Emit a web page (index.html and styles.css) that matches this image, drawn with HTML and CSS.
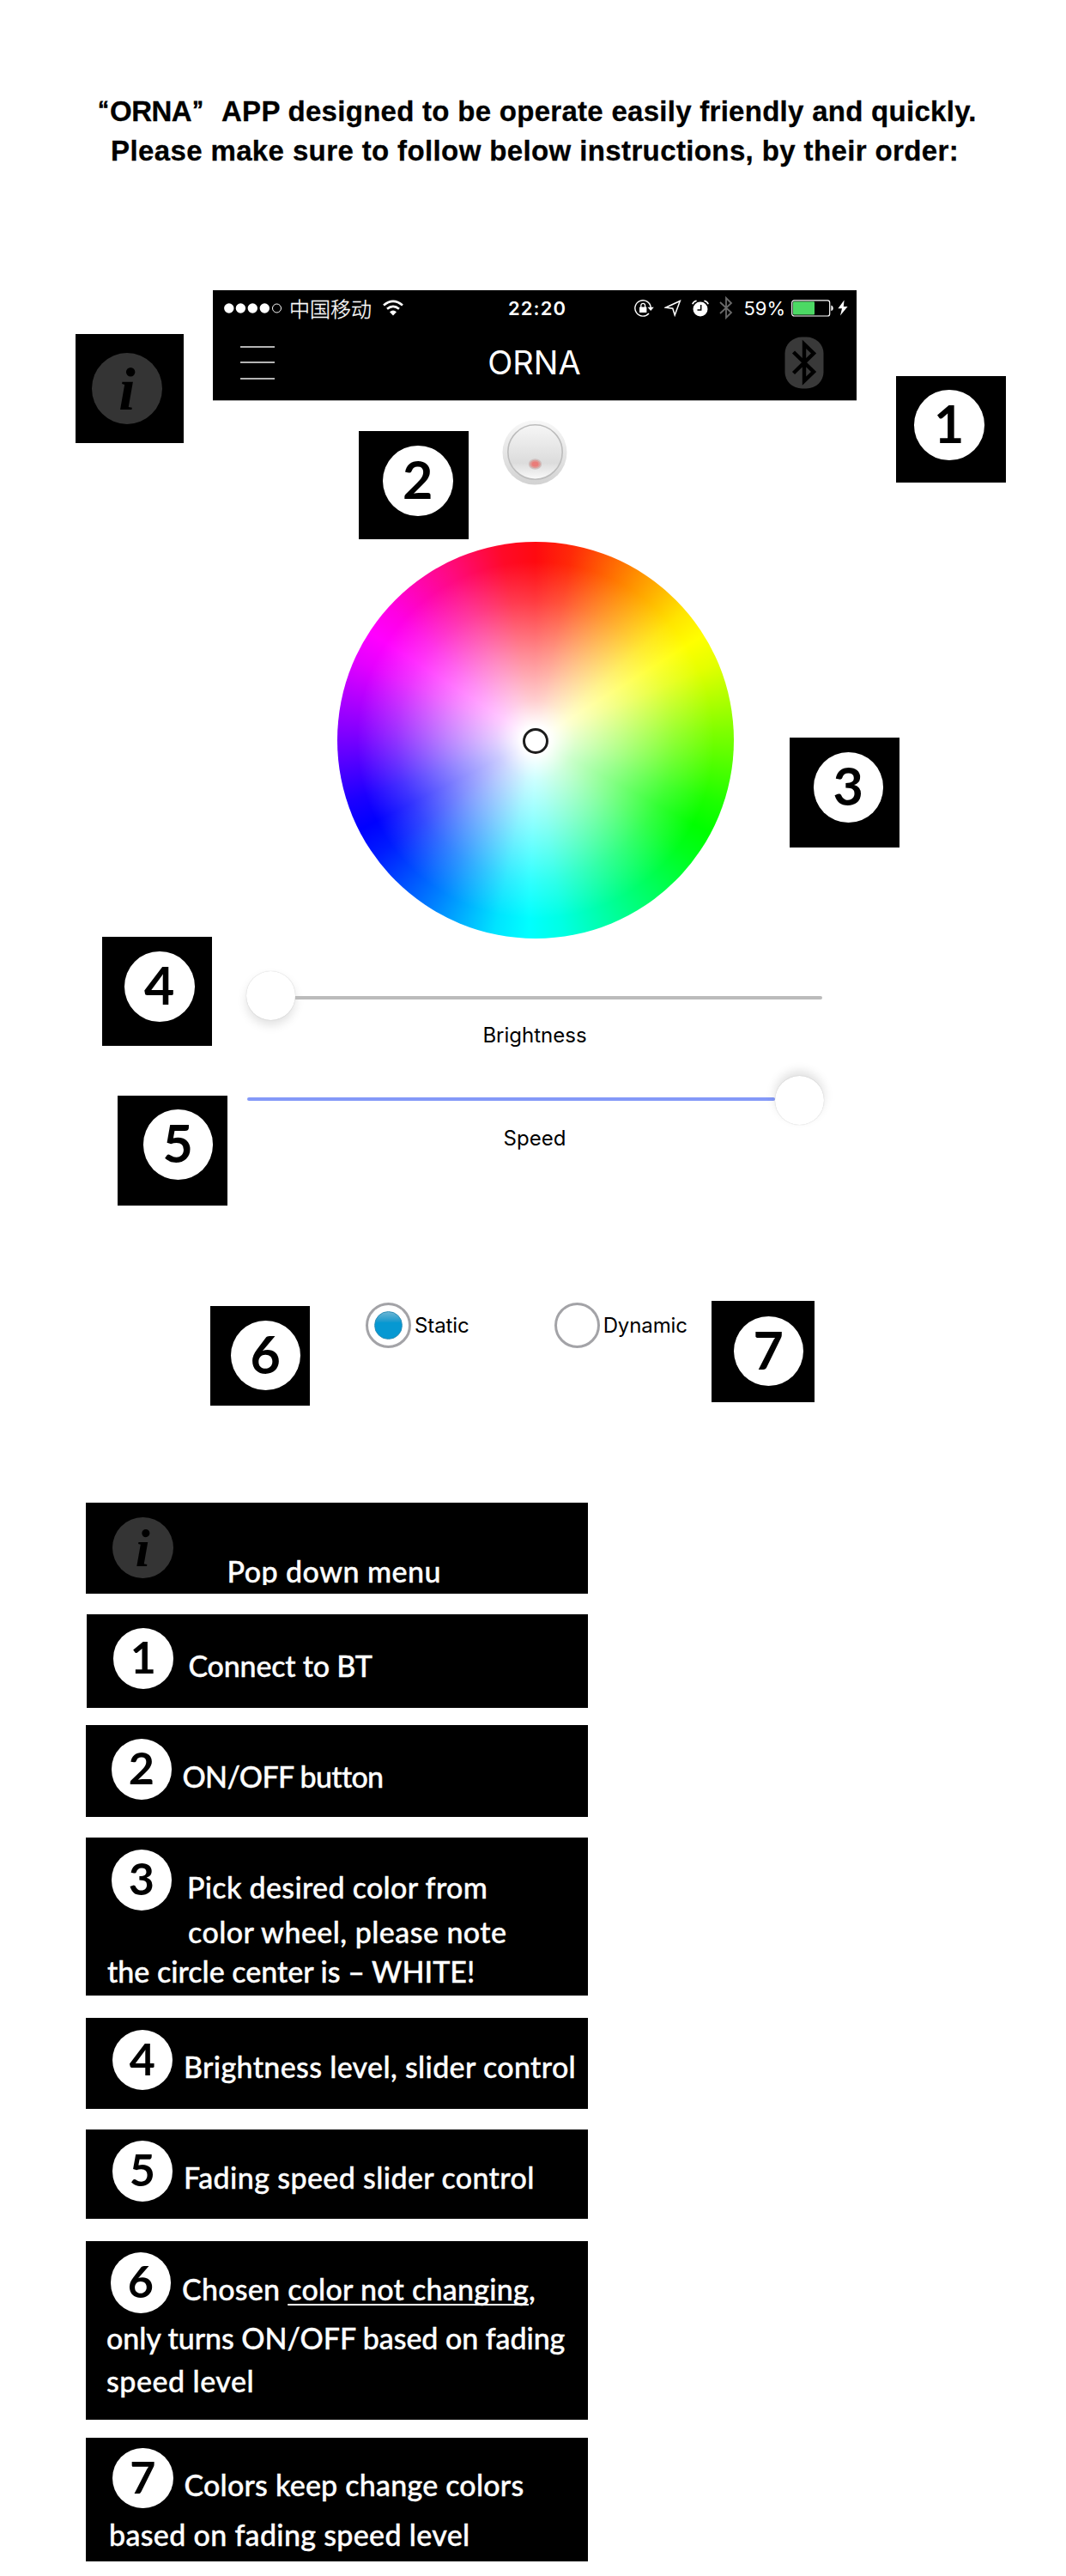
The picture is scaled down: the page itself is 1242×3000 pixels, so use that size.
FILE: index.html
```html
<!DOCTYPE html>
<html lang="en">
<head>
<meta charset="utf-8">
<title>ORNA APP instructions</title>
<link rel="stylesheet" href="styles.css">
</head>
<body>
<main class="page">
  <h1 class="title">
    <span class="title-line title-first"><span class="quote">“</span><span class="brand">ORNA</span><span class="quote quote-end">”</span><span class="title-rest">APP designed to be operate easily friendly and quickly.</span></span>
    <span class="title-line title-second">Please make sure to follow below instructions, by their order:</span>
  </h1>

  <section class="phone">
    <header class="phone-head">
      <div class="status">
        <div class="status-left">
          <svg width="70" height="14" viewBox="0 0 70 14"><g fill="#fff"><circle cx="6.800" cy="7" r="5.700"/><circle cx="20.400" cy="7" r="5.700"/><circle cx="34.300" cy="7" r="5.700"/><circle cx="48.300" cy="7" r="5.700"/></g><circle cx="62.500" cy="7" r="5" fill="none" stroke="#fff"/></svg>
          <span class="carrier">中国移动</span>
          <svg class="wifi" width="24" height="19" viewBox="0 0 24 19"><g fill="none" stroke="#fff" stroke-width="2.6"><path d="M1 6.5Q12-2.800 23 6.5"/><path d="M5 10.8Q12 4.800 19 10.8"/></g><path d="M8 14.2Q12 10.800 16 14.2L12 18.4Z" fill="#fff"/></svg>
        </div>
        <span class="time">22:20</span>
        <div class="status-right">
          <svg class="s-lock" width="23" height="20" viewBox="0 0 23 20"><path d="M19.2 9A9.2 9.2 0 1 0 17 16" fill="none" stroke="#fff" stroke-width="1.4"/><path d="M15.5 8.8h7.3l-3.6 4.2z" fill="#fff"/><rect x="6" y="8.4" width="8.4" height="6.6" rx=".6" fill="#fff"/><path d="M7.8 9V6.7a2.4 2.4 0 0 1 4.8 0V9" fill="none" stroke="#fff" stroke-width="1.3"/></svg>
          <svg class="s-arrow" width="20" height="20" viewBox="0 0 20 20"><path d="M18.3 1.5 1.6 9.2 9.8 10.2 12.2 18Z" fill="none" stroke="#fff" stroke-width="1.5"/></svg>
          <svg class="s-alarm" width="20" height="20" viewBox="0 0 20 20"><circle cx="10" cy="11" r="8.5" fill="#fff"/><path d="M.8 5.2Q2 2 5.6 1.3M19.2 5.2Q18 2 14.4 1.3" fill="none" stroke="#fff" stroke-width="1.6"/><path d="M10.7 6v6H6.5" fill="none" stroke="#000" stroke-width="1.5"/></svg>
          <svg class="s-bt" width="16" height="27" viewBox="0 0 16 27"><path d="M1 7 14 19 8 25V2L14 8 1 20" fill="none" stroke="#6a6a6a" stroke-width="1.8"/></svg>
          <span class="percent">59%</span>
          <svg class="s-battery" width="50" height="20" viewBox="0 0 50 20"><rect x=".7" y=".8" width="44" height="18.2" rx="2.6" fill="none" stroke="#fff" stroke-width="1.2"/><rect x="2" y="2.2" width="25" height="15.4" rx="1" fill="#4cd964"/><path d="M46.4 6.5q2.4.6 2.4 3.4t-2.4 3.4z" fill="#fff"/></svg>
          <svg class="s-bolt" width="12" height="19" viewBox="0 0 12 19"><path d="M7.6.4.4 10.3H5L3 18.6 11.6 7.9H6.8Z" fill="#fff"/></svg>
        </div>
      </div>
      <div class="nav">
        <div class="burger"><i></i><i></i><i></i></div>
        <span class="nav-title">ORNA</span>
        <svg class="nav-bt" width="46" height="61" viewBox="0 0 46 61"><rect x=".5" y=".5" width="45" height="60" rx="20" ry="19" fill="#393939"/><path d="M10.500 18 34 41 23 51.500V9L34 19.500 10.500 42.500" fill="none" stroke="#000" stroke-width="4.4"/></svg>
      </div>
    </header>

    <svg class="power" width="76" height="76" viewBox="0 0 76 76">
      <defs><linearGradient id="ring" x2="0" y2="1"><stop offset="0" stop-color="#f8f8f8"/><stop offset="1" stop-color="#d2d2d2"/></linearGradient><linearGradient id="face" x2="0" y2="1"><stop offset="0" stop-color="#f6f6f6"/><stop offset=".7" stop-color="#dcdcdc"/><stop offset="1" stop-color="#fafafa"/></linearGradient></defs>
      <circle cx="38" cy="38" r="37.500" fill="url(#ring)"/><circle cx="38.500" cy="37.500" r="31.700" fill="url(#face)" stroke="#bcbcbc" stroke-width="1.600"/>
      <ellipse cx="38.500" cy="51.500" rx="7" ry="5.500" fill="#dd9a96" stroke="#cfc0bf" stroke-width="1.500"/><ellipse cx="38.500" cy="51.500" rx="4" ry="3" fill="#ea7c79"/>
    </svg>

    <div class="wheel"><span class="picker"></span></div>

    <div class="slider slider-low"><span class="knob"></span><span class="track"></span></div>
    <p class="slider-label label-low">Brightness</p>
    <div class="slider slider-high"><span class="track"></span><span class="knob"></span></div>
    <p class="slider-label label-high">Speed</p>

    <div class="modes">
      <span class="radio radio-on"></span><span class="mode">Static</span>
      <span class="radio radio-off"></span><span class="mode mode-dynamic">Dynamic</span>
    </div>
  </section>

  <div class="callout c-info"><span class="badge info">i</span></div>
  <div class="callout c1"><span class="badge">1</span></div>
  <div class="callout c2"><span class="badge">2</span></div>
  <div class="callout c3"><span class="badge">3</span></div>
  <div class="callout c4"><span class="badge">4</span></div>
  <div class="callout c5"><span class="badge">5</span></div>
  <div class="callout c6"><span class="badge">6</span></div>
  <div class="callout c7"><span class="badge">7</span></div>

  <ul class="legend">
    <li class="item i0"><div class="head"><span class="mark info">i</span><p class="t">Pop down menu</p></div></li>
    <li class="item i1"><div class="head"><span class="mark">1</span><p class="t">Connect to BT</p></div></li>
    <li class="item i2"><div class="head"><span class="mark">2</span><p class="t">ON/OFF button</p></div></li>
    <li class="item i3"><div class="head"><span class="mark">3</span><div class="t"><p class="a">Pick desired color from</p><p class="b">color wheel, please note</p></div></div><p class="c">the circle center is – WHITE!</p></li>
    <li class="item i4"><div class="head"><span class="mark">4</span><p class="t">Brightness level, slider control</p></div></li>
    <li class="item i5"><div class="head"><span class="mark">5</span><p class="t">Fading speed slider control</p></div></li>
    <li class="item i6"><div class="head"><span class="mark">6</span><p class="t">Chosen <span class="under">color not changing</span>,</p></div><p class="b">only turns ON/OFF based on fading</p><p class="c">speed level</p></li>
    <li class="item i7"><div class="head"><span class="mark">7</span><p class="t">Colors keep change colors</p></div><p class="b">based on fading speed level</p></li>
  </ul>
</main>
</body>
</html>
```
FILE: styles.css
```css
* { box-sizing: border-box; }
body { margin: 0; background: #fff; color: #000; }
p, h1, ul { margin: 0; padding: 0; }
svg { display: block; flex: none; }

.page { position: relative; width: 1242px; height: 3000px; overflow: hidden; }

/* heading */
.title { height: 338px; padding-top: 107px; font: 700 33px/46px "Liberation Sans", Arial, sans-serif; white-space: nowrap; -webkit-text-stroke: .3px #000; }
.title-line { display: flex; }
.title-first { padding-left: 115px; }
.title-second { padding-left: 129px; letter-spacing: .38px; }
.quote { width: 13px; font-weight: 400; -webkit-text-stroke: 1px #000; }
.brand { width: 97px; letter-spacing: -.5px; }
.quote-end { width: 33px; }
.title-rest { letter-spacing: .28px; }

/* phone screen */
.phone { width: 750px; margin-left: 248px; font-family: Inter, sans-serif; }
.phone-head { height: 129px; background: #000; color: #fff; border-bottom: 1px solid #aaa; }
.status { display: grid; grid-template-columns: 344px 80px 1fr; align-items: center; height: 41px; }
.status-left, .status-right { display: flex; align-items: center; }
.status-left { padding-left: 12px; }
.carrier { width: 97px; margin-left: 7px; font: 300 24px/40px "Noto Sans CJK SC", sans-serif; -webkit-text-stroke: .3px #fff; white-space: nowrap; }
.wifi { margin-left: 12px; }
.time { font-size: 22px; font-weight: 600; letter-spacing: 1.1px; }
.status-right { justify-content: flex-end; padding-right: 10px; }
.s-arrow, .s-alarm, .s-bt { margin-left: 12px; }
.percent { width: 49px; margin-left: 13px; font-size: 22px; }
.s-battery { margin-left: 6px; }
.s-bolt { margin-left: 4.5px; }
.nav { display: grid; grid-template-columns: 1fr auto 1fr; align-items: center; height: 87px; padding: 0 38px 1px 32px; }
.burger { width: 40px; display: flex; flex-direction: column; gap: 16.5px; }
.burger i { height: 2px; background: #b4b4b4; }
.nav-title { font-size: 38px; line-height: 46px; margin-left: 5px; }
.nav-bt { justify-self: end; }

.power { margin: 22px 0 0 337px; }

.wheel {
  display: grid; place-items: center;
  width: 462px; height: 462px; margin: 66px 0 0 144.500px; border-radius: 50%;
  background:
    radial-gradient(circle closest-side, #fff 7%, rgba(255,255,255,.8) 20%, rgba(255,255,255,.52) 44%, rgba(255,255,255,.2) 70%, rgba(255,255,255,0) 90%),
    conic-gradient(#ff0a10, #ff2a08 11deg, #f80 30deg, #ffe400 49deg, #ff0 58deg, #e4ff00 67deg, #80ff00 87deg, #1cff00 109deg, #0f0 118deg, #00ff1c 127deg, #00ff80 150deg, #00ffe4 172deg, #0ff 182deg, #00e4ff 192deg, #0080ff 212deg, #001cff 234deg, #00f 243deg, #1c00ff 252deg, #8000ff 272deg, #e400ff 294deg, #f0f 303deg, #ff00e4 312deg, #ff0a80 333deg, #ff0a28 350deg, #ff0a10);
}
.picker { width: 30px; height: 30px; border: 3px solid #1c1c1c; border-radius: 50%; background: #fff; position: relative; top: 1px; }

.slider { display: flex; align-items: center; width: 673px; height: 57px; margin-left: 39px; }
.slider-low { margin-top: 38px; }
.slider-high { margin-top: 32px; }
.knob { width: 57px; height: 57px; border-radius: 50%; background: #fff; box-shadow: 0 0 1px rgba(0,0,0,.25), 0 6px 12px rgba(0,0,0,.12); }
.track { flex: 1; height: 4px; border-radius: 2px; background: #bbb; }
.slider-low .track { margin: 5px 2px 0 0; border-radius: 0 2px 2px 0; }
.slider-high .track { margin: 0 0 4px 1px; background: #8499f8; }
.slider-high .knob { box-shadow: 0 0 1px rgba(0,0,0,.25), 0 -6px 12px rgba(0,0,0,.12); }
.slider-label { font-size: 24px; line-height: 30px; text-align: center; }
.label-low { margin-top: 3px; }
.label-high { margin-top: 1px; }

.modes { display: flex; align-items: center; margin-top: 176px; padding-left: 178px; font-size: 24px; line-height: 30px; }
.radio { width: 53px; height: 53px; border: 3px solid #a3a3a7; border-radius: 50%; display: grid; place-items: center; }
.radio-on::after { content: ""; width: 31px; height: 31px; border-radius: 50%; border: 1px solid #2b8db5; background: linear-gradient(#6bb5d4, #1b9bce 35%, #0698d2 40%); }
.radio-off { margin-left: 99px; }
.mode { margin-left: 4px; padding-top: 1px; letter-spacing: -.1px; }
.mode-dynamic { letter-spacing: -.1px; }

/* numbered annotations pinned around the screen */
.callout { position: absolute; width: 128px; height: 127px; background: #000; }
.badge, .mark { display: block; border-radius: 50%; background: #fff; color: #000; text-align: center; font-family: Lato, sans-serif; font-weight: 700; flex: none; }
.badge { width: 81.500px; height: 81.500px; font-size: 61px; line-height: 77px; }
.info { background: #343434; font-family: "Liberation Serif", serif; font-style: italic; -webkit-text-stroke: 0; }
.badge.info { width: 82px; height: 83px; font-size: 70px; line-height: 85px; }
.c-info { left: 88px; top: 389px; width: 126px; padding: 22px 0 0 19px; }
.c1 { left: 1044px; top: 438px; height: 124px; padding: 16px 0 0 21px; }
.c2 { left: 418px; top: 502px; height: 126px; padding: 17px 0 0 28px; }
.c3 { left: 920px; top: 859px; height: 128px; padding: 17px 0 0 27.500px; }
.c4 { left: 119px; top: 1091px; padding: 17px 0 0 26px; }
.c5 { left: 137px; top: 1276px; height: 128px; padding: 16px 0 0 29.500px; }
.c6 { left: 245px; top: 1521px; width: 116px; height: 116px; padding: 16.500px 0 0 23.500px; }
.c7 { left: 829px; top: 1515px; width: 120px; height: 118px; padding: 17.500px 0 0 25.500px; }

/* legend */
.legend { position: absolute; left: 100px; top: 1750px; width: 585px; list-style: none; color: #fff; font: 500 34px/40px Lato, sans-serif; white-space: nowrap; -webkit-text-stroke: .4px #fff; }
.item { background: #000; overflow: hidden; }
.head { display: flex; align-items: flex-start; }
.mark { width: 70.500px; height: 70.500px; font-size: 52px; line-height: 67px; -webkit-text-stroke: 0; }
.mark.info { height: 71px; font-size: 61px; line-height: 73px; }

.i0 { height: 106px; }
.i0 .mark { margin: 17px 0 0 31px; }
.i0 .t { margin: 60px 0 0 63px; height: 36px; overflow: hidden; letter-spacing: .45px; }
.i1 { height: 109px; margin: 24px 0 0 1px; }
.i1 .mark { margin: 16px 0 0 30.500px; }
.i1 .t { margin: 40px 0 0 17.500px; letter-spacing: -.2px; }
.i2 { height: 107px; margin-top: 20px; }
.i2 .mark { margin: 16px 0 0 29.500px; }
.i2 .t { margin: 40px 0 0 12.500px; letter-spacing: -.7px; }
.i3 { height: 184px; margin-top: 24px; }
.i3 .mark { margin: 14px 0 0 29.500px; }
.i3 .t { margin: 38px 0 0 18px; }
.i3 .a { letter-spacing: .3px; }
.i3 .b { margin: 12px 0 0 1px; letter-spacing: .45px; }
.i3 .c { margin: 6px 0 0 25px; }
.i4 { height: 106px; margin-top: 26px; }
.i4 .mark { margin: 13.500px 0 0 30.500px; }
.i4 .t { margin: 37px 0 0 13px; letter-spacing: .34px; }
.i5 { height: 104px; margin-top: 24px; }
.i5 .mark { margin: 13px 0 0 30.500px; }
.i5 .t { margin: 36px 0 0 13px; letter-spacing: .38px; }
.i6 { height: 208px; margin-top: 26px; }
.i6 .mark { margin: 13px 0 0 28.500px; }
.i6 .t { margin: 36px 0 0 13px; letter-spacing: .26px; }
.under { text-decoration: underline; text-decoration-thickness: 2px; text-underline-offset: 4px; text-decoration-skip-ink: none; }
.i6 .b { margin: 9px 0 0 24px; letter-spacing: -.07px; }
.i6 .c { margin: 10px 0 0 24px; letter-spacing: .5px; }
.i7 { height: 144px; margin-top: 21px; }
.i7 .mark { margin: 11.500px 0 0 31px; }
.i7 .t { margin: 35px 0 0 13px; letter-spacing: .22px; }
.i7 .b { margin: 11px 0 0 27px; letter-spacing: .32px; }
```
